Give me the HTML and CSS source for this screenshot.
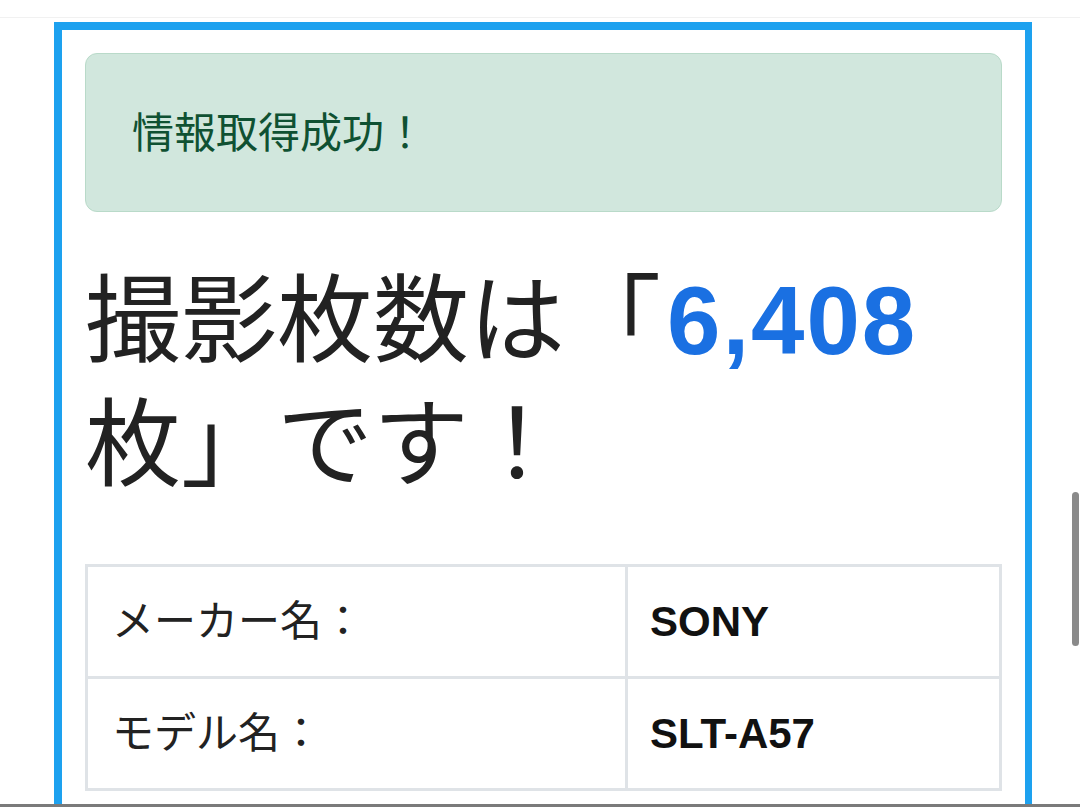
FILE: index.html
```html
<!DOCTYPE html>
<html lang="ja">
<head>
    <meta charset="UTF-8">
    <meta name="viewport" content="width=device-width, initial-scale=1.0">
    <title>撮影枚数チェッカー</title>
    <link rel="stylesheet" href="styles.css">
</head>
<body>
    <div class="topline"></div>
    <div class="container">
        <div class="alert">情報取得成功！</div>

        <h1 class="result">撮影枚数は「<span class="count">6,408</span>枚」です！</h1>

        <table class="info">
            <tr>
                <td class="label">メーカー名：</td>
                <td class="value">SONY</td>
            </tr>
            <tr>
                <td class="label">モデル名：</td>
                <td class="value">SLT-A57</td>
            </tr>
        </table>
    </div>

    <!-- スクロールバーと画面下の線 -->
    <div class="scrollbar"></div>
    <div class="bottombar"></div>
</body>
</html>
```

FILE: styles.css
```css
body {
    font-family: "Liberation Sans", "Noto Sans CJK JP", sans-serif;
    margin: 0;
    padding: 0;
    background-color: #ffffff;
    color: #212529;
    overflow: hidden;
}

.topline {
    height: 17px;
    border-bottom: 1px solid #f1f1f1;
    margin-bottom: 4px;
}

.container {
    margin-left: 54px;
    width: 917px;
    height: 900px;
    border: 8px solid #1da1ef;
    border-right-width: 7px;
    border-bottom: none;
    padding: 23px 23px 40px;
}

.alert {
    background-color: #d1e7dd;
    border: 1px solid #b9dac9;
    border-radius: 12px;
    color: #0f5132;
    font-size: 42px;
    line-height: 63px;
    padding: 48px 46px 46px;
}

.result {
    font-size: 96px;
    font-weight: normal;
    line-height: 124px;
    margin: 47px 0 57px;
    color: #222222;
}

.count {
    color: #1a70e2;
    font-weight: bold;
    letter-spacing: 2px;
    margin-left: 6px;
}

.info {
    width: 100%;
    border-collapse: collapse;
    font-size: 42px;
    line-height: 63px;
}

.info td {
    border: 3px solid #dfe3e7;
    padding: 23px 24px;
}

.info .label {
    width: 489px;
    color: #222222;
}

.info .value {
    font-weight: bold;
    color: #111111;
    padding-left: 22px;
}

.scrollbar {
    position: fixed;
    left: 1072px;
    top: 492px;
    width: 7px;
    height: 154px;
    border-radius: 4px;
    background-color: #8a8a8a;
}

.bottombar {
    position: fixed;
    left: 0;
    right: 0;
    bottom: 0;
    height: 3px;
    background-color: #7a7a7a;
}
```
